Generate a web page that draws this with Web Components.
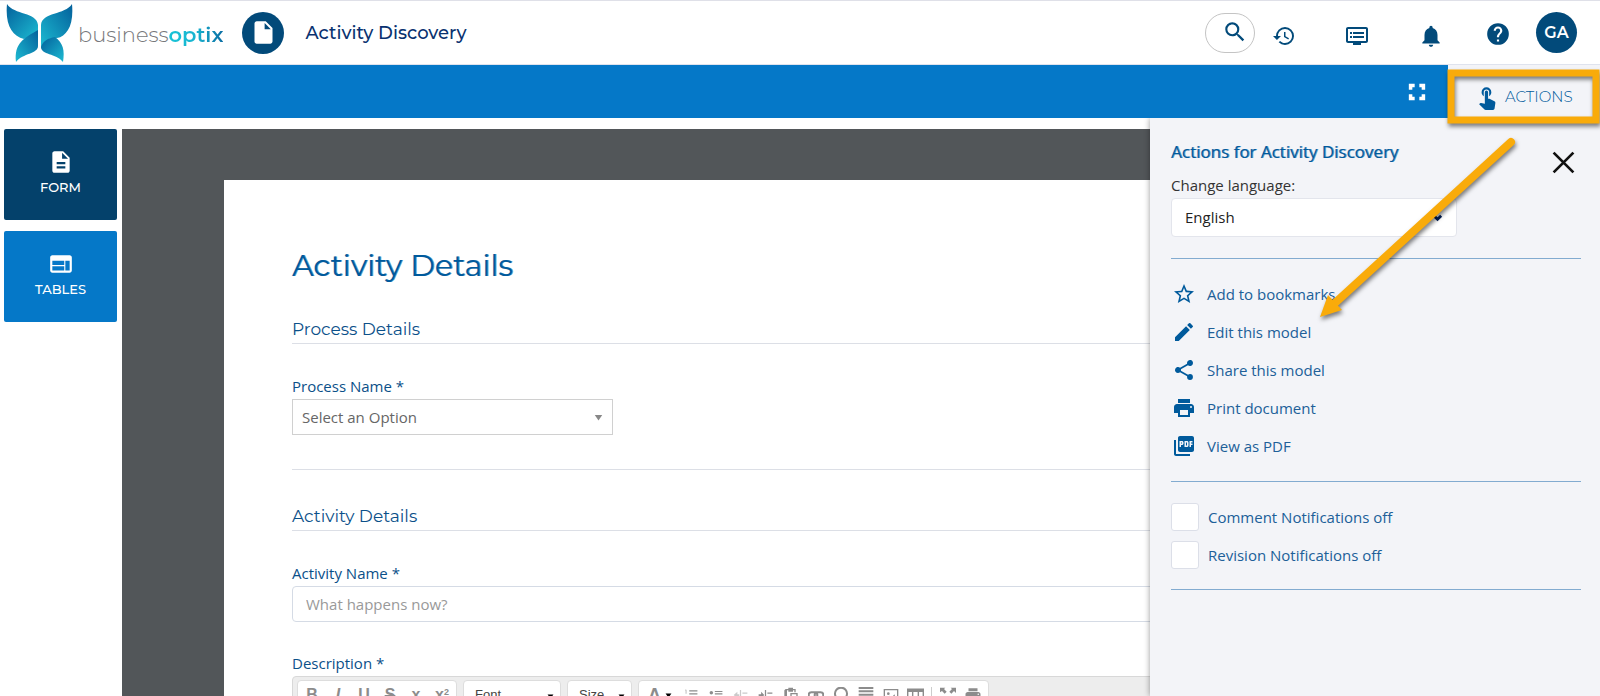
<!DOCTYPE html>
<html lang="en">
<head>
<meta charset="utf-8">
<title>Activity Discovery</title>
<style>
  html, body { margin: 0; height: 100%; }
  body {
    --blue: #0578c8; --navy: #024a7a; --ink: #005a9c; --pale: #f3f4f8; --rule: #dcdfe6;
    --display: Montserrat, Inter, sans-serif;
    font: 15px/20px "Open Sans", sans-serif; color: #333; background: #fff; overflow: hidden;
  }
</style>
</head>
<body>
<bx-app></bx-app>
<script>
const ICONS = {
  file: '<path d="M6 2c-1.100 0-2 .9-2 2v16c0 1.100.9 2 2 2h12c1.100 0 2-.9 2-2V8l-6-6H6zm7 7V3.500L18.500 9H13z"/>',
  form: '<path d="M14 2H6c-1.100 0-2 .9-2 2v16c0 1.100.9 2 2 2h12c1.100 0 2-.9 2-2V8l-6-6zm2 16H8v-2h8v2zm0-4H8v-2h8v2zm-3-5V3.500L18.500 9H13z"/>',
  tables: '<path d="M20 4H4c-1.100 0-2 .9-2 2v12c0 1.100.9 2 2 2h16c1.100 0 2-.9 2-2V6c0-1.100-.9-2-2-2zm-5 14H4v-4h11v4zm0-5H4V9h11v4zm5 5h-4V9h4v9z"/>',
  search: '<path d="M15.500 14h-.79l-.28-.27A6.471 6.471 0 0 0 16 9.500 6.500 6.500 0 1 0 9.500 16c1.610 0 3.090-.59 4.230-1.570l.27.28v.79l5 4.990L20.490 19l-4.990-5zm-6 0C7.010 14 5 11.990 5 9.500S7.010 5 9.500 5 14 7.010 14 9.500 11.990 14 9.500 14z"/>',
  history: '<path d="M13 3a9 9 0 0 0-9 9H1l3.890 3.890.07.14L9 12H6c0-3.870 3.130-7 7-7s7 3.130 7 7-3.130 7-7 7c-1.930 0-3.680-.79-4.940-2.060l-1.420 1.420A8.954 8.954 0 0 0 13 21a9 9 0 0 0 0-18zm-1 5v5l4.280 2.540.72-1.210-3.500-2.080V8H12z"/>',
  dvr: '<path d="M21 3H3c-1.100 0-2 .9-2 2v12c0 1.100.9 2 2 2h5v2h8v-2h5c1.100 0 1.990-.9 1.990-2L23 5c0-1.100-.9-2-2-2zm0 14H3V5h18v12zm-2-9H8v2h11V8zm0 4H8v2h11v-2zM7 8H5v2h2V8zm0 4H5v2h2v-2z"/>',
  bell: '<path d="M12 22c1.100 0 2-.9 2-2h-4c0 1.100.89 2 2 2zm6-6v-5c0-3.070-1.640-5.640-4.500-6.320V4a1.500 1.500 0 0 0-3 0v.68C7.630 5.360 6 7.920 6 11v5l-2 2v1h16v-1l-2-2z"/>',
  help: '<path d="M12 2a10 10 0 1 0 0 20 10 10 0 0 0 0-20zm1 17h-2v-2h2v2zm2.070-7.750-.9.920C13.450 12.900 13 13.500 13 15h-2v-.5c0-1.100.45-2.100 1.170-2.830l1.240-1.260c.37-.36.59-.86.59-1.410a2 2 0 0 0-4 0H8a4 4 0 0 1 8 0c0 .88-.36 1.680-.93 2.250z"/>',
  full: '<path d="M5 10h3V8h2V5H5zM14 5v3h2v2h3V5zM16 16h-2v3h5v-5h-3zM8 14H5v5h5v-3H8z"/>',
  touch: '<path d="M9 11.240V7.500a2.500 2.500 0 0 1 5 0v3.740c1.210-.81 2-2.180 2-3.740a4.500 4.500 0 0 0-9 0c0 1.560.79 2.930 2 3.740zm9.840 4.630-4.540-2.260c-.17-.07-.35-.11-.54-.11H13v-6a1.500 1.500 0 0 0-3 0v10.740l-3.430-.72a1.120 1.120 0 0 0-1.030.3l-.79.800 4.940 4.940c.27.27.65.44 1.060.44h6.790c.75 0 1.330-.55 1.440-1.280l.75-5.270c.01-.07.02-.14.02-.2 0-.62-.38-1.160-.91-1.380z"/>',
  close: '<path d="M2.500 2.500l19 19m0-19l-19 19" fill="none" stroke="currentColor" stroke-width="2.600"/>',
  star: '<path d="M22 9.240l-7.190-.62L12 2 9.190 8.630 2 9.240l5.460 4.730L5.820 21 12 17.270 18.180 21l-1.630-7.030L22 9.240zM12 15.400l-3.760 2.270 1-4.280-3.320-2.880 4.380-.38L12 6.100l1.710 4.040 4.380.38-3.320 2.880 1 4.280L12 15.400z"/>',
  edit: '<path d="M3 17.250V21h3.750L17.810 9.940l-3.750-3.750L3 17.250zM20.710 7.040a1 1 0 0 0 0-1.410l-2.340-2.340a1 1 0 0 0-1.410 0l-1.830 1.830 3.750 3.750 1.830-1.830z"/>',
  share: '<path d="M18 16.080c-.76 0-1.440.3-1.960.77L8.910 12.700c.05-.23.09-.46.09-.7s-.04-.47-.09-.7l7.050-4.110A3 3 0 1 0 15 5c0 .24.04.47.09.7L8.040 9.810A3 3 0 1 0 6 15c.79 0 1.500-.31 2.040-.81l7.120 4.160c-.05.21-.08.43-.08.65A2.920 2.920 0 1 0 18 16.080z"/>',
  print: '<path d="M19 8H5c-1.660 0-3 1.340-3 3v6h4v4h12v-4h4v-6c0-1.660-1.340-3-3-3zm-3 11H8v-5h8v5zm3-7a1 1 0 1 1 0-2 1 1 0 0 1 0 2zm-1-9H6v4h12V3z"/>',
  pdf: '<path d="M20 2H8c-1.100 0-2 .9-2 2v12c0 1.100.9 2 2 2h12c1.100 0 2-.9 2-2V4c0-1.100-.9-2-2-2zm-8.500 7.500c0 .83-.67 1.500-1.500 1.500H9v2H7.500V7H10c.83 0 1.500.67 1.500 1.500v1zm5 2c0 .83-.67 1.500-1.500 1.500h-2.500V7H15c.83 0 1.500.67 1.500 1.500v3zm4-3H19v1h1.500V11H19v2h-1.500V7h3v1.500zM9 9.500h1v-1H9v1zM4 6H2v14c0 1.100.9 2 2 2h14v-2H4V6zm10 5.500h1v-3h-1v3z"/>',
  chevron: '<path d="M4 8l8 8 8-8" fill="none" stroke="currentColor" stroke-width="6"/>',
  caret: '<path d="M2 5h20L12 20z"/>',
  olist: '<path d="M2 3h2v7H3V4H2zM9 4h14v2H9zM9 9h14v2H9zM2 14h3v2l-2 3h2v1H2v-2l2-3H2zM9 15h14v2H9z"/>',
  ulist: '<circle cx="4" cy="8" r="3"/><path d="M10 5h13v2H10zM10 9h13v2H10zM10 17h13v2H10z"/><circle cx="4" cy="18" r="3"/>',
  outdent: '<path d="M11 3h2v20h-2zM15 7h8v2h-8zM15 13h8v2h-8zM1 11l6-5v4h3v3H7v4z"/>',
  indent: '<path d="M11 3h2v20h-2zM15 7h8v2h-8zM15 13h8v2h-8zM10 11L5 6v4H1v3h4v4z"/>',
  paste: '<path d="M4 3h4V1h7v2h4v5h-2V5h-2v2H8V5H6v13h3v2H2V5zM11 9h11v13H11zm2 2v9h7v-9z" fill-rule="evenodd"/>',
  link: '<g fill="none" stroke="currentColor" stroke-width="3"><rect x="1" y="8" width="13" height="8" rx="4"/><rect x="10" y="8" width="13" height="8" rx="4"/></g>',
  omega: '<path d="M2 20h6v-2a9 9 0 1 1 8 0v2h6" fill="none" stroke="currentColor" stroke-width="3"/>',
  justify: '<path d="M1 0h22v3H1zM1 5h22v3H1zM1 10h22v3H1zM1 15h22v3H1z"/>',
  image: '<path d="M1 3h22v18H1zm2 2v14h18V5z" fill-rule="evenodd"/><circle cx="8" cy="10" r="2"/><path d="M5 18l5-5 3 3 4-5 3 7z"/>',
  table: '<path d="M0 2h24v20H0zm2 5v6h5V7zm7 0v6h6V7zm8 0v6h5V7zM2 15v5h5v-5zm7 0v5h6v-5zm8 0v5h5v-5z" fill-rule="evenodd"/>',
  expand: '<path d="M0 1h8L6 3l4 4-3 3-4-4-3 2zM24 1v8l-3-3-4 4-3-3 4-4-2-2zM0 23v-8l3 3 4-4 3 3-4 4 2 2zM24 23h-8l2-2-4-4 3-3 4 4 3-3z"/>',
};

/* Base element: renders the class's static template into an open shadow root. */
class Bx extends HTMLElement {
  constructor() {
    super();
    const t = document.createElement('template');
    t.innerHTML = '<style>*{box-sizing:border-box}button,input,select{font:inherit;color:inherit;margin:0}button{background:none;border:0;padding:0;cursor:pointer}</style>' + this.constructor.html;
    this.attachShadow({ mode: 'open' }).append(t.content.cloneNode(true));
  }
}
const define = (name, html) => customElements.define(name, class extends Bx { static html = html; });

customElements.define('bx-icon', class extends HTMLElement {
  connectedCallback() {
    if (this.shadowRoot) return;
    const s = this.getAttribute('size') || 24;
    this.attachShadow({ mode: 'open' }).innerHTML =
      `<style>:host{display:inline-flex;flex:none}svg{display:block;fill:currentColor}</style>
       <svg width="${s}" height="${s}" viewBox="0 0 24 24" aria-hidden="true">${ICONS[this.getAttribute('name')]}</svg>`;
  }
});

define('bx-logo', `
<style>
  :host { display: block; }
  a { display: flex; align-items: center; gap: 5px; text-decoration: none; color: #77787b; font: 300 21px/28px var(--display); }
  span { padding-top: 5px; }
  b { font-weight: 600; background: linear-gradient(90deg, #17c3d6, #18b4d0 50%, #0a6da3); -webkit-background-clip: text; background-clip: text; color: transparent; }
  svg { display: block; }
</style>
<a href="#" aria-label="businessoptix home">
  <svg width="67" height="60" viewBox="0 0 67 60">
    <defs>
      <linearGradient id="a" x1="0" y1="0" x2="1" y2="1"><stop offset="0" stop-color="#03609b"/><stop offset="1" stop-color="#1dbbd2"/></linearGradient>
      <linearGradient id="b" x1="1" y1="0" x2="0" y2="1"><stop offset="0" stop-color="#03609b"/><stop offset="1" stop-color="#1dbbd2"/></linearGradient>
    </defs>
    <path d="M1 1C8 12 31 9 32 22v10l-14 4C6 33-1 22 1 1z" fill="url(#a)"/>
    <path d="M66 1C59 12 36 9 35 22v23l8-9 8-1C61 33 68 22 66 1z" fill="url(#b)"/>
    <path d="M32 27v16c0 8-15 7-22 16-2-19 8-24 22-32z" fill="url(#b)"/>
    <path d="M35 44c2-6 7-9 14-10 8 6 10 13 8 25-7-9-22-7-22-15z" fill="url(#a)"/>
  </svg>
  <span>business<b>optix</b></span>
</a>`);

define('bx-header', `
<style>
  :host { display: flex; align-items: center; height: 65px; flex: none; border-top: 1px solid #dfe0e8; border-bottom: 1px solid #dfe3ee; padding: 0 23px 0 6px; color: var(--navy); }
  .doc { width: 42px; height: 42px; margin-left: 19px; border-radius: 50%; background: var(--navy); color: #fff; display: grid; place-items: center; }
  h1 { margin: 0 auto 0 21px; font: 500 18px/24px var(--display); color: #0a3270; }
  .tools { display: flex; align-items: center; }
  .tools button { display: flex; }
  .tools .search { width: 50px; height: 40px; border: 1px solid #c4c4c4; border-radius: 20px; justify-content: center; padding: 5px 0 0 10px; margin-right: 17px; }
  .tools .low { padding-top: 6px; }
  .gap { margin-right: 49px; }
  .tools .avatar { width: 41px; height: 41px; border-radius: 50%; background: var(--navy); color: #fff; font: 600 16px/41px var(--display); display: block; text-align: center; }
</style>
<bx-logo></bx-logo>
<span class="doc"><bx-icon name="file" size="27"></bx-icon></span>
<h1>Activity Discovery</h1>
<div class="tools">
  <button class="search" aria-label="Search"><bx-icon name="search" size="26"></bx-icon></button>
  <button class="low gap" aria-label="History"><bx-icon name="history"></bx-icon></button>
  <button class="low gap" aria-label="Queue"><bx-icon name="dvr"></bx-icon></button>
  <button class="low" aria-label="Notifications" style="margin-right:41px"><bx-icon name="bell" size="26"></bx-icon></button>
  <button aria-label="Help" style="margin-right:25px;padding-top:2px"><bx-icon name="help" size="26"></bx-icon></button>
  <button class="avatar">GA</button>
</div>`);

define('bx-bar', `
<style>
  :host { display: flex; justify-content: flex-end; align-items: stretch; height: 53px; flex: none; background: var(--blue); color: #fff; }
  button { display: flex; align-items: center; }
  .full { padding: 0 17px; }
  .actions { width: 152px; padding: 11px 0 0 26px; gap: 5px; background: var(--pale); color: var(--ink); font: 300 15px/20px var(--display); }
</style>
<button class="full" aria-label="Full screen"><bx-icon name="full" size="28"></bx-icon></button>
<button class="actions"><bx-icon name="touch" size="26"></bx-icon>ACTIONS</button>`);

define('bx-tile', `
<style>
  :host { display: block; }
  button { width: 100%; height: 91px; border-radius: 2px; background: var(--blue); color: #fff; display: flex; flex-direction: column; align-items: center; justify-content: center; gap: 2px; font: 500 13px/20px var(--display); padding-bottom: 3px; }
  :host([active]) button { background: #04416b; }
</style>
<button><slot name="icon"></slot><span><slot></slot></span></button>`);

define('bx-section', `
<style>
  :host { display: block; }
  h3 { margin: 0 0 32px; padding-bottom: 2px; border-bottom: 1px solid var(--rule); font: 400 17px/24px var(--display); color: #0b5089; }
</style>
<section><h3><slot name="title"></slot></h3><slot></slot></section>`);

define('bx-editor', `
<style>
  :host { display: block; border: 1px solid #d8d8d8; border-radius: 4px; background: #ededed; padding: 3px 4px; color: #8c8c8c; font: 13px/16px "Liberation Sans", sans-serif; }
  .bar { display: flex; gap: 6px; margin-bottom: 4px; }
  .group { display: flex; align-items: center; height: 32px; border: 1px solid #ddd; border-radius: 4px; background: #fff; padding: 0 3px; }
  .group button { width: 25px; height: 30px; display: flex; align-items: center; justify-content: center; flex: none; padding-bottom: 2px; }
  .marks { padding: 0 1px; }
  .group.marks button { width: 26px; font: bold 16px/20px "Liberation Sans", sans-serif; }
  .combo { position: relative; color: #444; padding: 0; }
  .combo bx-icon, .color bx-icon { color: #000; }
  .combo bx-icon { position: absolute; right: 6px; top: 12px; pointer-events: none; }
  select { appearance: none; border: 0; background: none; height: 30px; width: 100%; padding: 0 11px 2px; }
  .font { width: 98px; }
  .size { width: 65px; }
  .group .color { width: 36px; gap: 4px; font: bold 18px/20px "Liberation Sans", sans-serif; }
  .dim { opacity: .45; }
  .sep { width: 1px; height: 18px; margin: 0 3px; background: #ccc; }
  sup { font-size: 9px; line-height: 10px; margin-bottom: 6px; }
</style>
<div class="bar">
  <div class="group marks"><button>B</button><button><i>I</i></button><button><u>U</u></button><button><s>S</s></button><button>x</button><button>x<sup>2</sup></button></div>
  <div class="group combo font"><select aria-label="Font"><option>Font</option></select><bx-icon name="caret" size="7"></bx-icon></div>
  <div class="group combo size"><select aria-label="Size"><option>Size</option></select><bx-icon name="caret" size="7"></bx-icon></div>
  <div class="group">
    <button class="color">A<bx-icon name="caret" size="7"></bx-icon></button>
    <button aria-label="Numbered list"><bx-icon name="olist" size="14"></bx-icon></button>
    <button aria-label="Bulleted list"><bx-icon name="ulist" size="14"></bx-icon></button>
    <button class="dim" aria-label="Outdent"><bx-icon name="outdent" size="15"></bx-icon></button>
    <button aria-label="Indent"><bx-icon name="indent" size="15"></bx-icon></button>
    <button aria-label="Paste"><bx-icon name="paste" size="16"></bx-icon></button>
    <button aria-label="Link"><bx-icon name="link" size="16"></bx-icon></button>
    <button aria-label="Symbol"><bx-icon name="omega" size="16"></bx-icon></button>
    <button aria-label="Justify"><bx-icon name="justify" size="16"></bx-icon></button>
    <button aria-label="Image"><bx-icon name="image" size="16"></bx-icon></button>
    <button aria-label="Table"><bx-icon name="table" size="17"></bx-icon></button>
    <span class="sep"></span>
    <button aria-label="Maximise"><bx-icon name="expand" size="16"></bx-icon></button>
    <button aria-label="Print"><bx-icon name="print" size="18"></bx-icon></button>
  </div>
</div>
<slot></slot>`);

define('bx-paper', `
<style>
  :host { display: block; background: #fff; padding: 64px 68px; color: #0b5089; }
  h2 { margin: 0 0 29px; font: 400 30px/44px var(--display); color: var(--ink); text-shadow: 1px 0 0 rgba(0,90,156,.6); }
  label { display: block; line-height: 20px; margin-bottom: 3px; }
  .pick { position: relative; width: 321px; color: #666; }
  .pick select { appearance: none; display: block; width: 100%; height: 36px; border: 1px solid #d0d0d0; background: #fff; padding: 0 9px; }
  .pick bx-icon { position: absolute; right: 10px; top: 14px; color: #888; }
  hr { margin: 34px 0; border: 0; border-top: 1px solid var(--rule); }
  input { display: block; width: 100%; height: 36px; border: 1px solid #d5dbe5; border-radius: 4px; padding: 0 13px; margin-bottom: 31px; color: #333; }
  input::placeholder { color: #999; opacity: 1; }
  textarea { display: block; width: 100%; height: 160px; border: 0; resize: none; }
</style>
<h2>Activity Details</h2>
<bx-section><span slot="title">Process Details</span>
  <label for="process">Process Name *</label>
  <div class="pick"><select id="process"><option>Select an Option</option></select><bx-icon name="caret" size="9"></bx-icon></div>
  <hr>
</bx-section>
<bx-section><span slot="title">Activity Details</span>
  <label for="activity">Activity Name *</label>
  <input id="activity" placeholder="What happens now?">
  <label for="description">Description *</label>
  <bx-editor><textarea id="description"></textarea></bx-editor>
</bx-section>`);

define('bx-action', `
<style>
  :host { display: block; }
  a { display: flex; align-items: center; gap: 11px; padding-left: 1px; height: 24px; color: #205f98; text-decoration: none; }
  ::slotted(bx-icon) { color: var(--ink); }
</style>
<a href="#"><slot name="icon"></slot><span><slot></slot></span></a>`);

define('bx-panel', `
<style>
  :host { display: block; background: var(--pale); box-shadow: 0 0 6px rgba(0,0,0,.4); padding: 21px 19px 20px 21px; clip-path: inset(0 0 0 -10px); }
  header { display: flex; justify-content: space-between; align-items: flex-start; }
  h2 { margin: 0; font: 400 17px/26px "Open Sans", sans-serif; color: var(--ink); text-shadow: 1px 0 0 rgba(0,90,156,.6); }
  .close { display: flex; margin: 11px 5px 0 0; color: #111; height: 8px; }
  label { display: block; }
  .lang { margin-top: 10px; }
  .pick { position: relative; width: 286px; margin-top: 3px; }
  select { appearance: none; display: block; width: 100%; height: 39px; border: 1px solid #e3e5ec; border-radius: 4px; background: #fff; padding: 0 13px 2px; color: #222; }
  .pick bx-icon { position: absolute; right: 14px; top: 14px; color: #00205c; }
  hr { border: 0; border-top: 1px solid #82abd0; margin: 21px 0; }
  nav { display: grid; gap: 14px; padding: 2px 0; }
  .checks { display: grid; gap: 10px; margin-bottom: 20px; }
  .checks label { display: flex; align-items: center; gap: 9px; height: 28px; color: #205f98; }
  .checks input { appearance: none; width: 28px; height: 28px; border: 1px solid #dcdfe8; border-radius: 3px; background: #fff; }
  .checks + hr { margin: 0; }
</style>
<header><h2>Actions for Activity Discovery</h2><button class="close" aria-label="Close"><bx-icon name="close" size="25"></bx-icon></button></header>
<label class="lang" for="lang">Change language:</label>
<div class="pick"><select id="lang"><option>English</option></select><bx-icon name="chevron" size="11"></bx-icon></div>
<hr>
<nav>
  <bx-action><bx-icon slot="icon" name="star"></bx-icon>Add to bookmarks</bx-action>
  <bx-action><bx-icon slot="icon" name="edit"></bx-icon>Edit this model</bx-action>
  <bx-action><bx-icon slot="icon" name="share"></bx-icon>Share this model</bx-action>
  <bx-action><bx-icon slot="icon" name="print"></bx-icon>Print document</bx-action>
  <bx-action><bx-icon slot="icon" name="pdf"></bx-icon>View as PDF</bx-action>
</nav>
<hr>
<div class="checks">
  <label><input type="checkbox">Comment Notifications off</label>
  <label><input type="checkbox">Revision Notifications off</label>
</div>
<hr>`);

/* Callout that rings the Actions button and points at "Edit this model". */
define('bx-callout', `
<style>
  :host { display: block; pointer-events: none; }
  svg { display: block; filter: drop-shadow(1px 3px 2px rgba(0,0,0,.5)); }
</style>
<svg width="300" height="270" viewBox="1300 60 300 270" aria-hidden="true">
  <rect x="1451" y="73" width="145" height="47" fill="none" stroke="#f9ab0a" stroke-width="7"/>
  <path d="M1511 142L1335 303" stroke="#f9ab0a" stroke-width="8" stroke-linecap="round"/>
  <path d="M1320 317l8-22 14 15z" fill="#f9ab0a"/>
</svg>`);

define('bx-app', `
<style>
  :host { display: flex; flex-direction: column; height: 100vh; position: relative; overflow: hidden; }
  main { flex: 1; min-height: 0; display: flex; position: relative; padding: 11px 0 0 4px; gap: 5px; }
  .tiles { width: 113px; flex: none; display: flex; flex-direction: column; gap: 11px; }
  .canvas { flex: 1; min-width: 0; background: #525659; padding: 51px 102px 0; overflow: hidden; }
  bx-panel { position: absolute; top: 0; right: 0; bottom: 0; width: 450px; }
  bx-callout { position: absolute; top: 60px; right: 0; }
</style>
<bx-header></bx-header>
<bx-bar></bx-bar>
<main>
  <nav class="tiles">
    <bx-tile active><bx-icon slot="icon" name="form" size="26"></bx-icon>FORM</bx-tile>
    <bx-tile><bx-icon slot="icon" name="tables" size="26"></bx-icon>TABLES</bx-tile>
  </nav>
  <div class="canvas"><bx-paper></bx-paper></div>
  <bx-panel></bx-panel>
</main>
<bx-callout></bx-callout>`);
</script>
</body>
</html>
